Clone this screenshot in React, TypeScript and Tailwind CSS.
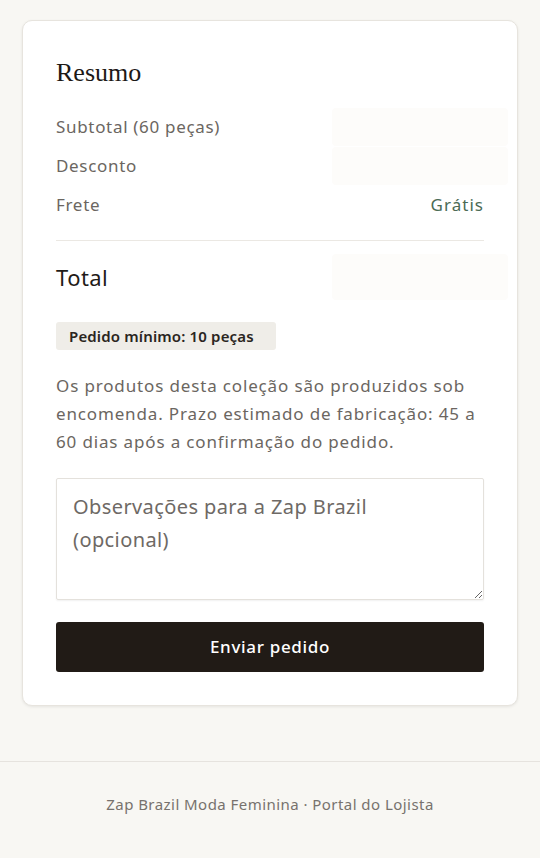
import React from "react";

const sans = { fontFamily: '"Noto Sans", "Open Sans", sans-serif' };

function Row({ label, value, blur }: { label: string; value?: string; blur?: boolean }) {
  return (
    <div className="flex h-[39px] items-center justify-between">
      <span className="text-[17px] tracking-[0.04em] text-[#6b6661]">{label}</span>
      {value ? (
        <span className="text-[17px] tracking-[0.06em] text-[#4b6b55]">{value}</span>
      ) : blur ? (
        <span className="h-[38px] w-[176px] -mr-[24px] rounded bg-[#fdfcfa]" />
      ) : null}
    </div>
  );
}

export default function App() {
  return (
    <div className="flex min-h-[858px] flex-col bg-[#f8f7f3]" style={sans}>
      <main className="px-[22px] pt-5 pb-[55px]">
        <section className="rounded-[10px] border border-[#e7e4de] bg-white px-[33px] pt-[36px] pb-[33px] shadow-[0_1px_3px_rgba(0,0,0,0.08)]">
          <h2
            className="mb-[18px] text-[26px] leading-[32px] text-[#1d1916]"
            style={{ fontFamily: '"Liberation Serif", "DejaVu Serif", serif' }}
          >
            Resumo
          </h2>
          <Row label="Subtotal (60 peças)" blur />
          <Row label="Desconto" blur />
          <Row label="Frete" value="Grátis" />
          <div className="mt-[16px] border-t border-[#ebe8e3]" />
          <div className="flex h-[72px] items-center justify-between">
            <span className="text-[22px] tracking-[0.02em] text-[#1f1b18]">Total</span>
            <span className="h-[46px] w-[176px] -mr-[24px] rounded bg-[#fdfcfa]" />
          </div>
          <div className="mt-[9px] inline-flex h-[28px] items-center rounded-[3px] bg-[#efede8] pl-[13px] pr-[22px] text-[15px] font-semibold tracking-[0.01em] text-[#2a2521]">
            Pedido mínimo: 10 peças
          </div>
          <p className="mt-[22px] text-[17px] leading-[28px] tracking-[0.05em] text-[#6b6661]">
            Os produtos desta coleção são produzidos sob encomenda. Prazo estimado de fabricação: 45 a 60 dias após a confirmação do pedido.
          </p>
          <textarea
            placeholder="Observações para a Zap Brazil (opcional)"
            className="mt-[22px] block h-[122px] w-full resize-y rounded-[2px] border border-[#e4e1dc] px-[16px] py-[11px] text-[20px] leading-[33px] tracking-[0.02em] text-[#2a2521] placeholder:text-[#6e6965] shadow-[0_1px_2px_rgba(0,0,0,0.06)] outline-none"
          />
          <button className="mt-[22px] flex h-[50px] w-full items-center justify-center rounded-[3px] bg-[#211b16] text-[17px] font-medium tracking-[0.04em] text-white">
            Enviar pedido
          </button>
        </section>
      </main>
      <footer className="flex flex-1 items-start justify-center border-t border-[#e6e3de] pt-[31px] text-[15px] tracking-[0.03em] text-[#77726d]">
        Zap Brazil Moda Feminina · Portal do Lojista
      </footer>
    </div>
  );
}
